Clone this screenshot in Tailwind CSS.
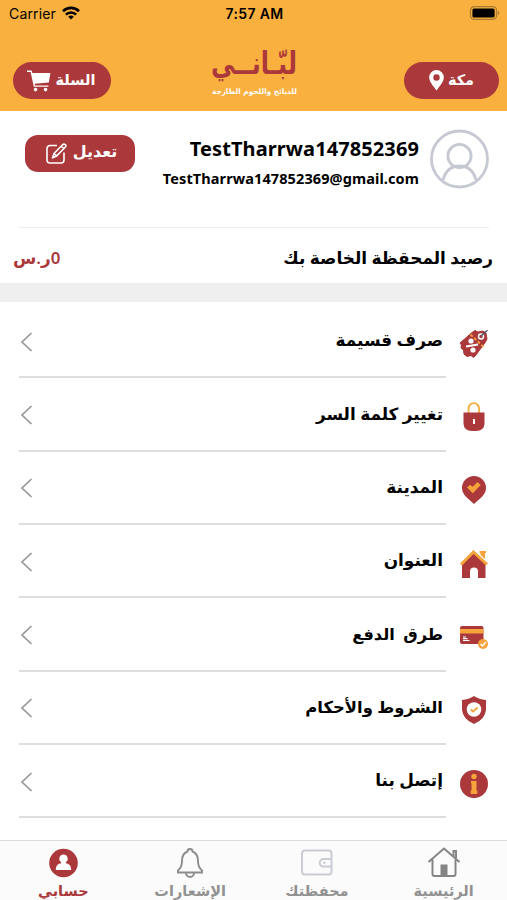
<!DOCTYPE html>
<html lang="ar" dir="rtl">
<head>
  <meta charset="UTF-8" />
  <meta name="viewport" content="width=device-width, initial-scale=1.0"/>
  <title>لبّاني - حسابي</title>
  <script src="https://cdn.jsdelivr.net/npm/@tailwindcss/browser@4"></script>
</head>
<body class="h-screen overflow-hidden bg-white flex flex-col text-black font-bold font-['Noto_Sans','DejaVu_Sans',sans-serif]">

  <!-- Header -->
  <header class="h-[111px] shrink-0 bg-[#f9b03f]">
    <div dir="ltr" class="h-7 grid grid-cols-3 items-center pl-[9px] pr-[7px] font-['Inter',sans-serif] text-[14px] leading-none">
      <div class="flex items-center gap-[6px] font-normal tracking-[0.15px]">
        <span>Carrier</span>
        <svg class="w-[18px] h-[14px] -mt-[2px]" viewBox="0 0 18 14" fill="none" stroke="#000" stroke-width="2.6">
          <path d="M1 5.2a11.4 11.4 0 0 1 16 0M3.9 8.6a7.2 7.2 0 0 1 10.2 0"/>
          <path d="M9 13.6l-2.8-2.8a4 4 0 0 1 5.6 0z" fill="#000" stroke="none"/>
        </svg>
      </div>
      <span class="text-center font-semibold tracking-[0.35px]">7:57 AM</span>
      <svg class="w-[31px] h-[14px] -mt-[2px] justify-self-end" viewBox="0 0 31 14">
        <rect x="1.500" y=".7" width="26" height="12.6" rx="3.6" fill="none" stroke="#a87b2f" stroke-width="1.2"/>
        <rect x="3.400" y="2.5" width="22.200" height="9" rx="1.6"/>
        <path d="M28.8 4.8c2 .9 2 3.5 0 4.4z" fill="#a87b2f"/>
      </svg>
    </div>
    <div class="flex justify-between pr-[8px] pl-[13px] pt-[4px] text-white text-[14.500px] leading-none">
      <button class="mt-[30px] w-[95px] h-[37px] rounded-full bg-[#ab383a] flex items-center justify-center gap-[4px]">
        <span class="-mt-[3px]">مكة</span>
        <svg class="w-[15px] h-[21px]" viewBox="0 0 15 21" fill="#fff">
          <path fill-rule="evenodd" d="M7.500 0A7.300 7.300 0 0 0 .2 7.400C.2 12 4.500 16 7.500 20.600 10.500 16 14.800 12 14.800 7.400A7.300 7.300 0 0 0 7.500 0zM7.500 4.300a3.200 3.200 0 1 1 0 6.400 3.200 3.200 0 0 1 0-6.400z"/>
        </svg>
      </button>
      <svg class="w-[98px] h-[72px] mr-[3px] -ml-[4px] overflow-visible" viewBox="-4 -10 98 72" direction="rtl" font-family="DejaVu Sans" font-weight="bold">
        <text x="88" y="32" font-size="31" fill="#ab383a" textLength="86" lengthAdjust="spacingAndGlyphs">لبّـانــي</text>
        <text x="88" y="52" font-size="7.500" fill="#fff" textLength="85" lengthAdjust="spacingAndGlyphs">للذبائح واللحوم الطازجة</text>
      </svg>
      <button class="mt-[30px] w-[98px] h-[37px] rounded-full bg-[#ab383a] flex items-center justify-center gap-[5px] pl-[2px] pr-[4px]">
        <span class="-mt-[3px]">السلة</span>
        <svg class="w-[24px] h-[22px]" viewBox="0 0 24 22" fill="#fff">
          <path d="M0 .6h4.600L5.400 3H23.400L21.800 12.500 7.600 13.800 8 15.400H21.400V16.800H6.800L3.600 2H0z"/>
          <circle cx="8.600" cy="19.600" r="1.800"/><circle cx="18.600" cy="19.600" r="1.800"/>
        </svg>
      </button>
    </div>
  </header>

  <!-- Profile -->
  <section class="h-[116px] shrink-0 flex items-start pr-[17px] pl-[25px] pt-[18px]">
    <svg class="w-[60px] h-[60px] shrink-0" viewBox="0 0 60 60" fill="none" stroke="#c6c8d2" stroke-width="2.800">
      <circle cx="29.500" cy="30" r="28"/>
      <circle cx="29.500" cy="27" r="11.600"/>
      <path d="M13 51C15.500 42 21.500 37 29.500 37S43.500 42 46 51"/>
    </svg>
    <div dir="ltr" class="flex-1 mr-[11px] pt-[10px] text-right leading-none whitespace-nowrap">
      <p class="text-[20px] tracking-[0.1px]">TestTharrwa147852369</p>
      <p class="text-[14.500px] mt-[12px] tracking-[0.1px]">TestTharrwa147852369@gmail.com</p>
    </div>
    <button class="-mr-[138px] mt-[6px] w-[110px] h-[37px] shrink-0 rounded-[13px] bg-[#ab383a] text-white text-[16px] flex items-center justify-center gap-[6px] pl-[3px]">
      <span class="-mt-[6px]">تعديل</span>
      <svg class="w-[21px] h-[21px]" viewBox="0 0 21 21" fill="none" stroke="#fff" stroke-width="1.600" stroke-linejoin="round">
        <path d="M11 2.500H4A3 3 0 0 0 1 5.500V17a3 3 0 0 0 3 3H15a3 3 0 0 0 3-3V9.500"/>
        <path d="M6.500 14.800L8 10.500 16.800 1.500Q18 .6 19.200 1.600T19.400 4L10.700 12.900zM8.500 11l2.200 2M15.500 3.200l2.400 2.400"/>
      </svg>
    </button>
  </section>

  <!-- Wallet balance -->
  <section class="h-[56px] shrink-0 mr-[14px] ml-[13px] pt-[5px] relative flex items-center justify-between text-[16.900px]">
    <div class="absolute top-0 right-1 left-[6px] h-px bg-[#ededed]"></div>
    <span>رصيد المحقظة الخاصة بك</span>
    <span class="text-[#ab383a] font-semibold">0ر.س</span>
  </section>
  <div class="h-[19px] shrink-0 bg-[#efefef]"></div>

  <!-- Menu -->
  <ul class="pt-[3px] pr-[18px] pl-[19px] text-[16.900px] leading-none">
    <li class="h-[73.330px] flex items-center gap-[13px]">
      <svg class="w-[30px] h-[30px] mt-1" viewBox="0 0 30 30">
        <path d="M1 14L13 3.500 16 1.500 19 3 24 2 27 4 28 10 26.500 13 17 26 14.500 28.500 12 26.500 8 27.500 5 25 4.500 21 2 19 2.500 16z" fill="#ab383a" stroke="#ab383a" stroke-linejoin="round"/>
        <path d="M11.500 5.500L25 18.500" stroke="#f5a33a" stroke-width="1.800" stroke-dasharray="3 2"/>
        <circle cx="22" cy="7.500" r="2.500" fill="none" stroke="#fff" stroke-width="1.500"/>
        <path d="M22 7L28.500 1.200" stroke="#4d526b" stroke-width="1.300"/>
        <path d="M7 17.500L19 15.500" stroke="#fff" stroke-width="2"/>
        <circle cx="12" cy="12" r="2.600" fill="#fff"/><circle cx="14" cy="21" r="2.600" fill="#fff"/>
      </svg>
      <div class="flex-1 h-full flex items-center justify-between border-b-2 border-[#dedede] pr-[3px] pl-[1px]">
        <span>صرف قسيمة</span>
        <svg class="w-[13px] h-[20px] mt-[2px]" viewBox="0 0 13 20" fill="none" stroke="#979797" stroke-width="1.700"><path d="M11.500 1L2 10l9.500 9"/></svg>
      </div>
    </li>
    <li class="h-[73.330px] flex items-center gap-[13px]">
      <svg class="w-[30px] h-[30px] mt-1" viewBox="0 0 30 30">
        <path d="M9.500 11V6.500a5.300 5.300 0 0 1 10.600 0V11" fill="none" stroke="#f5ab40" stroke-width="1.800"/>
        <path d="M4.500 10.500H25.500V22Q25 29 17 29H13Q5 29 4.500 22z" fill="#ab383a"/>
        <path d="M15 17v5" stroke="#fff" stroke-width="2"/>
      </svg>
      <div class="flex-1 h-full flex items-center justify-between border-b-2 border-[#dedede] pr-[3px] pl-[1px]">
        <span>تغيير كلمة السر</span>
        <svg class="w-[13px] h-[20px] mt-[2px]" viewBox="0 0 13 20" fill="none" stroke="#979797" stroke-width="1.700"><path d="M11.500 1L2 10l9.500 9"/></svg>
      </div>
    </li>
    <li class="h-[73.330px] flex items-center gap-[13px]">
      <svg class="w-[30px] h-[30px] mt-1" viewBox="0 0 30 30">
        <path d="M15 1A12 12 0 0 0 3 13C3 20 9 23 15 29 21 23 27 20 27 13A12 12 0 0 0 15 1z" fill="#ab383a"/>
        <path d="M8 12.500l3-2.700 2.700 2L18.500 7l3.200 3L13.800 18.300z" fill="#f5a33a"/>
      </svg>
      <div class="flex-1 h-full flex items-center justify-between border-b-2 border-[#dedede] pr-[3px] pl-[1px]">
        <span>المدينة</span>
        <svg class="w-[13px] h-[20px] mt-[2px]" viewBox="0 0 13 20" fill="none" stroke="#979797" stroke-width="1.700"><path d="M11.500 1L2 10l9.500 9"/></svg>
      </div>
    </li>
    <li class="h-[73.330px] flex items-center gap-[13px]">
      <svg class="w-[30px] h-[30px] mt-1" viewBox="0 0 30 30">
        <path d="M3 15L14.500 4 26.500 15V29H19V22.500a4 4 0 0 0-8 0V29H3z" fill="#ab383a"/>
        <path d="M20.500 2h6.500v2h-1v6l-4.500-4V4h-1z" fill="#f5a33a"/>
        <path d="M2 15.500L14.500 3 28 15.500" fill="none" stroke="#f5a33a" stroke-width="3"/>
      </svg>
      <div class="flex-1 h-full flex items-center justify-between border-b-2 border-[#dedede] pr-[3px] pl-[1px]">
        <span>العنوان</span>
        <svg class="w-[13px] h-[20px] mt-[2px]" viewBox="0 0 13 20" fill="none" stroke="#979797" stroke-width="1.700"><path d="M11.500 1L2 10l9.500 9"/></svg>
      </div>
    </li>
    <li class="h-[73.330px] flex items-center gap-[13px]">
      <svg class="w-[30px] h-[30px] mt-1" viewBox="0 0 30 30">
        <rect x="1" y="4" width="23.500" height="18" rx="2" fill="#ab383a"/>
        <path d="M1 7h23.500v4.500H1z" fill="#f5a33a"/>
        <path d="M4 15h3M4 18.500h6.500M4 16.700h4.500" stroke="#fff" stroke-width="1.200"/>
        <circle cx="24" cy="22" r="5" fill="#f5a33a"/>
        <path d="M21.500 22l2 2 3.200-4" fill="none" stroke="#fff" stroke-width="1.500"/>
      </svg>
      <div class="flex-1 h-full flex items-center justify-between border-b-2 border-[#dedede] pr-[3px] pl-[1px]">
        <span class="whitespace-pre text-[16.200px]">طرق  الدفع</span>
        <svg class="w-[13px] h-[20px] mt-[2px]" viewBox="0 0 13 20" fill="none" stroke="#979797" stroke-width="1.700"><path d="M11.500 1L2 10l9.500 9"/></svg>
      </div>
    </li>
    <li class="h-[73.330px] flex items-center gap-[13px]">
      <svg class="w-[30px] h-[30px] mt-1" viewBox="0 0 30 30">
        <path d="M15 1Q20 4.500 27 5V15Q26 24.500 15 29 4 24.500 3 15V5Q10 4.500 15 1z" fill="#ab383a"/>
        <circle cx="15" cy="14.500" r="7.300" fill="#fff"/>
        <path d="M11.800 14.500l2.300 2 4.500-4" fill="none" stroke="#f5a33a" stroke-width="1.700"/>
      </svg>
      <div class="flex-1 h-full flex items-center justify-between border-b-2 border-[#dedede] pr-[3px] pl-[1px]">
        <span class="text-[16.400px]">الشروط والأحكام</span>
        <svg class="w-[13px] h-[20px] mt-[2px]" viewBox="0 0 13 20" fill="none" stroke="#979797" stroke-width="1.700"><path d="M11.500 1L2 10l9.500 9"/></svg>
      </div>
    </li>
    <li class="h-[73.330px] flex items-center gap-[13px]">
      <svg class="w-[30px] h-[30px] mt-1" viewBox="0 0 30 30">
        <circle cx="15" cy="15" r="14" fill="#ab383a"/>
        <circle cx="15" cy="7.500" r="2.700" fill="#f5a33a"/>
        <path d="M12 12h5.500v9.500h.8V25H11.700v-3.500h.8V14.500H12z" fill="#f5a33a"/>
      </svg>
      <div class="flex-1 h-full flex items-center justify-between border-b-2 border-[#dedede] pr-[3px] pl-[1px]">
        <span>إتصل بنا</span>
        <svg class="w-[13px] h-[20px] mt-[2px]" viewBox="0 0 13 20" fill="none" stroke="#979797" stroke-width="1.700"><path d="M11.500 1L2 10l9.500 9"/></svg>
      </div>
    </li>
  </ul>

  <!-- Tab bar -->
  <nav class="absolute bottom-0 inset-x-0 h-[60px] bg-[#fbfbfb] border-t border-[#dcdcdc] grid grid-cols-4 text-[14.500px] leading-none text-[#929292] overflow-hidden">
    <a class="flex flex-col items-center pt-[5px]">
      <svg class="w-[34px] h-[34px]" viewBox="0 0 34 34" fill="none" stroke="#858585" stroke-width="2">
        <path d="M1.500 16L17 2.500 32.500 16M5.500 13.500V28a2 2 0 0 0 2 2h19a2 2 0 0 0 2-2V13.500M26.500 10V5h2.500v7"/>
        <path d="M13.500 18.500h7V30h-7z" fill="#858585" stroke="none"/>
      </svg>
      <span class="mt-[3px]">الرئيسية</span>
    </a>
    <a class="flex flex-col items-center pt-[5px]">
      <svg class="w-[34px] h-[34px]" viewBox="0 0 34 34" fill="none" stroke="#c9ccd2" stroke-width="2">
        <rect x="2" y="4.500" width="29.500" height="24" rx="3"/>
        <path d="M31.500 13H23.500a3.800 3.800 0 0 0 0 7.600H31.500M23 16.800h2.500"/>
      </svg>
      <span class="mt-[3px]">محفظتك</span>
    </a>
    <a class="flex flex-col items-center pt-[5px]">
      <svg class="w-[34px] h-[34px]" viewBox="0 0 34 34" fill="none" stroke="#8c8c8c" stroke-width="1.900">
        <path d="M14.500 5.500a2.500 2.500 0 0 1 5 0C24 7 25 11 25 15 25 20 26.500 22.500 29 24.500V26.500H5V24.500C7.500 22.500 9 20 9 15 9 11 10 7 14.500 5.500zM13 27a4 4 0 0 0 8 0"/>
      </svg>
      <span class="mt-[3px]">الإشعارات</span>
    </a>
    <a class="flex flex-col items-center pt-[5px] text-[#ab383a]">
      <svg class="w-[34px] h-[34px]" viewBox="0 0 34 34">
        <circle cx="17.500" cy="17" r="14.300" fill="#ab383a"/>
        <path d="M17.500 8.500a4.200 4.200 0 0 1 2.300 7.700v1C23 17.600 25.200 19.500 25.200 24H9.800C9.800 19.500 12 17.600 15.200 17.200v-1A4.200 4.200 0 0 1 17.500 8.500z" fill="#fff"/>
      </svg>
      <span class="mt-[3px]">حسابي</span>
    </a>
  </nav>
</body>
</html>
